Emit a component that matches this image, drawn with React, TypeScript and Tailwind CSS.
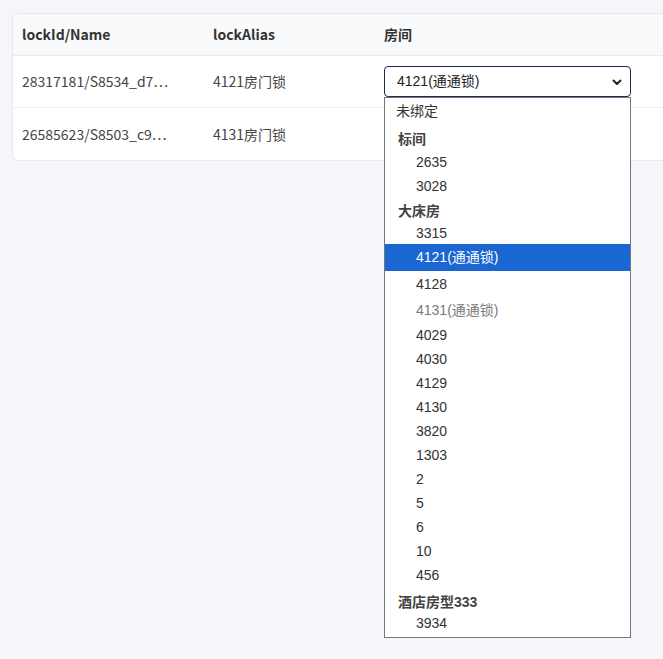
import React from 'react';

type Opt = {
  label: string;
  kind: 'top' | 'group' | 'opt';
  h: string;
  disabled?: boolean;
  selected?: boolean;
};

const options: Opt[] = [
  { label: '未绑定', kind: 'top', h: 'h-[27px]' },
  { label: '标间', kind: 'group', h: 'h-[25px] pt-[3px]' },
  { label: '2635', kind: 'opt', h: 'h-[24px]' },
  { label: '3028', kind: 'opt', h: 'h-[24px]' },
  { label: '大床房', kind: 'group', h: 'h-[24px] pt-[2px]' },
  { label: '3315', kind: 'opt', h: 'h-[22px]' },
  { label: '4121(通通锁)', kind: 'opt', h: 'h-[27px]', selected: true },
  { label: '4128', kind: 'opt', h: 'h-[26px]' },
  { label: '4131(通通锁)', kind: 'opt', h: 'h-[26px]', disabled: true },
  { label: '4029', kind: 'opt', h: 'h-[24px]' },
  { label: '4030', kind: 'opt', h: 'h-[24px]' },
  { label: '4129', kind: 'opt', h: 'h-[24px]' },
  { label: '4130', kind: 'opt', h: 'h-[24px]' },
  { label: '3820', kind: 'opt', h: 'h-[24px]' },
  { label: '1303', kind: 'opt', h: 'h-[24px]' },
  { label: '2', kind: 'opt', h: 'h-[24px]' },
  { label: '5', kind: 'opt', h: 'h-[24px]' },
  { label: '6', kind: 'opt', h: 'h-[24px]' },
  { label: '10', kind: 'opt', h: 'h-[24px]' },
  { label: '456', kind: 'opt', h: 'h-[24px]' },
  { label: '酒店房型333', kind: 'group', h: 'h-[26px] pt-[4px]' },
  { label: '3934', kind: 'opt', h: 'h-[20px]' },
];

const rows = [
  { name: '28317181/S8534_d7⋯', alias: '4121房门锁' },
  { name: '26585623/S8503_c9⋯', alias: '4131房门锁' },
];

const sans = "font-['Noto_Sans_CJK_SC','Noto_Sans',sans-serif]";
const listFont = "font-['Liberation_Sans','Noto_Sans_CJK_SC',sans-serif]";

function Dropdown() {
  return (
    <div className={`absolute left-0 top-[31px] z-10 w-[247px] border border-[#767676] bg-white pb-[4px] text-[14px] text-[#333] ${listFont}`}>
      {options.map((o) => {
        if (o.kind === 'group') {
          return (
            <div key={o.label} className={`flex items-center pl-[13px] font-bold text-[#444] ${o.h}`}>
              {o.label}
            </div>
          );
        }
        return (
          <div
            key={o.label}
            className={`flex items-center ${o.h} ${o.kind === 'top' ? 'pl-[11px]' : 'pl-[31px]'} ${
              o.selected ? 'bg-[#1a66d2] text-white' : o.disabled ? 'text-[#7a7a7a]' : ''
            }`}
          >
            {o.label}
          </div>
        );
      })}
    </div>
  );
}

export default function App() {
  return (
    <div className={`min-h-screen bg-[#f5f6fa] pl-3 pt-[13px] ${sans}`}>
      <div className="w-[680px] rounded-md border border-[#e6e8ee] bg-white">
        <div className="flex h-[42px] items-center rounded-t-md border-b border-[#e8eaef] bg-[#f9fafb] text-[14px] font-bold text-[#333]">
          <div className="w-[200px] pl-[9px]">lockId/Name</div>
          <div className="w-[171px]">lockAlias</div>
          <div>房间</div>
        </div>
        {rows.map((r, i) => (
          <div
            key={r.name}
            className={`flex h-[52px] items-center text-[14px] text-[#444] ${i === 0 ? 'border-b border-[#eceef2]' : ''}`}
          >
            <div className="w-[200px] pl-[9px]">{r.name}</div>
            <div className="w-[171px]">{r.alias}</div>
            {i === 0 && (
              <div className="relative">
                <div className={`flex h-[31px] w-[247px] items-center justify-between rounded-[4px] border border-[#1f2b4d] pl-3 pr-[7px] text-[14px] text-[#222] ${listFont}`}>
                  <span>4121(通通锁)</span>
                  <svg width="12" height="12" viewBox="0 0 12 12" fill="none">
                    <path d="M2.5 4.5L6 8l3.5-3.5" stroke="#222" strokeWidth="2" strokeLinecap="round" strokeLinejoin="round" />
                  </svg>
                </div>
                <Dropdown />
              </div>
            )}
          </div>
        ))}
      </div>
    </div>
  );
}
